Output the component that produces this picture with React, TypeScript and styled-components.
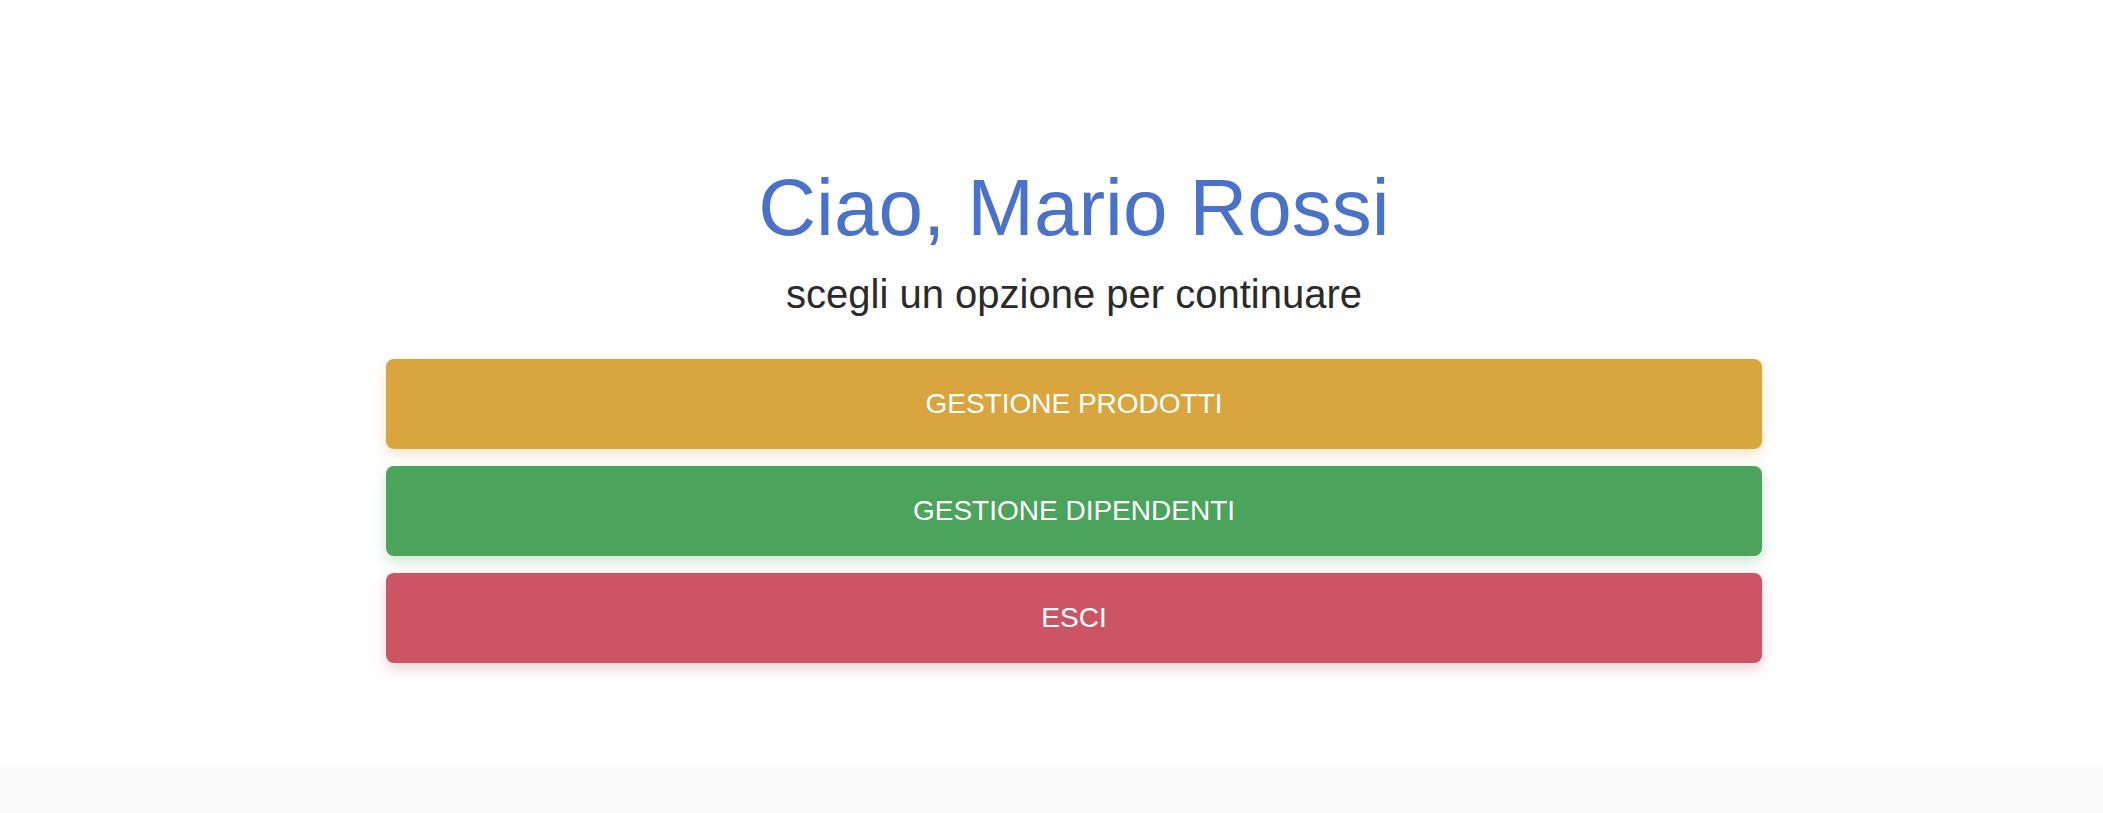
import React from "react";
import styled, { createGlobalStyle } from "styled-components";

const Global = createGlobalStyle`
  html, body { margin: 0; padding: 0; background: #ffffff; }
  body { font-family: "Liberation Sans", Arial, Helvetica, sans-serif; }
  * { box-sizing: border-box; }
`;

const Page = styled.div`
  display: flex;
  flex-direction: column;
  height: 813px;
  overflow: hidden;
`;

const Main = styled.main`
  flex: 1;
  padding: 162px 0 0 45px;
  display: flex;
  justify-content: center;
`;

const Panel = styled.section`
  width: 1376px;
  display: flex;
  flex-direction: column;
  align-items: stretch;
`;

const Title = styled.h1`
  margin: 0;
  font-size: 80px;
  line-height: 92px;
  font-weight: 400;
  color: #4a72c8;
  text-align: center;
`;

const Subtitle = styled.p`
  margin: 17px 0 0;
  font-size: 40px;
  line-height: 46px;
  color: #2a2a2a;
  text-align: center;
`;

const Actions = styled.div`
  margin-top: 42px;
  display: flex;
  flex-direction: column;
  gap: 17px;
`;

const ActionButton = styled.button<{ $bg: string; $shadow: string }>`
  height: 90px;
  width: 100%;
  border: none;
  border-radius: 8px;
  background: ${(p) => p.$bg};
  color: #ffffff;
  font-family: "Liberation Sans", Arial, Helvetica, sans-serif;
  font-size: 28px;
  text-transform: uppercase;
  cursor: pointer;
  box-shadow: 0 6px 14px ${(p) => p.$shadow};
`;

const Footer = styled.footer`
  flex: 0 0 46px;
  background: #fafafa;
`;

export default function App() {
  return (
    <>
      <Global />
      <Page>
        <Main>
          <Panel>
            <Title>Ciao, Mario Rossi</Title>
            <Subtitle>scegli un opzione per continuare</Subtitle>
            <Actions>
              <ActionButton $bg="#d9a53f" $shadow="rgba(217,165,63,0.28)">
                Gestione prodotti
              </ActionButton>
              <ActionButton $bg="#4ca35b" $shadow="rgba(76,163,91,0.28)">
                Gestione dipendenti
              </ActionButton>
              <ActionButton $bg="#cc5565" $shadow="rgba(204,85,101,0.28)">
                Esci
              </ActionButton>
            </Actions>
          </Panel>
        </Main>
        <Footer />
      </Page>
    </>
  );
}
